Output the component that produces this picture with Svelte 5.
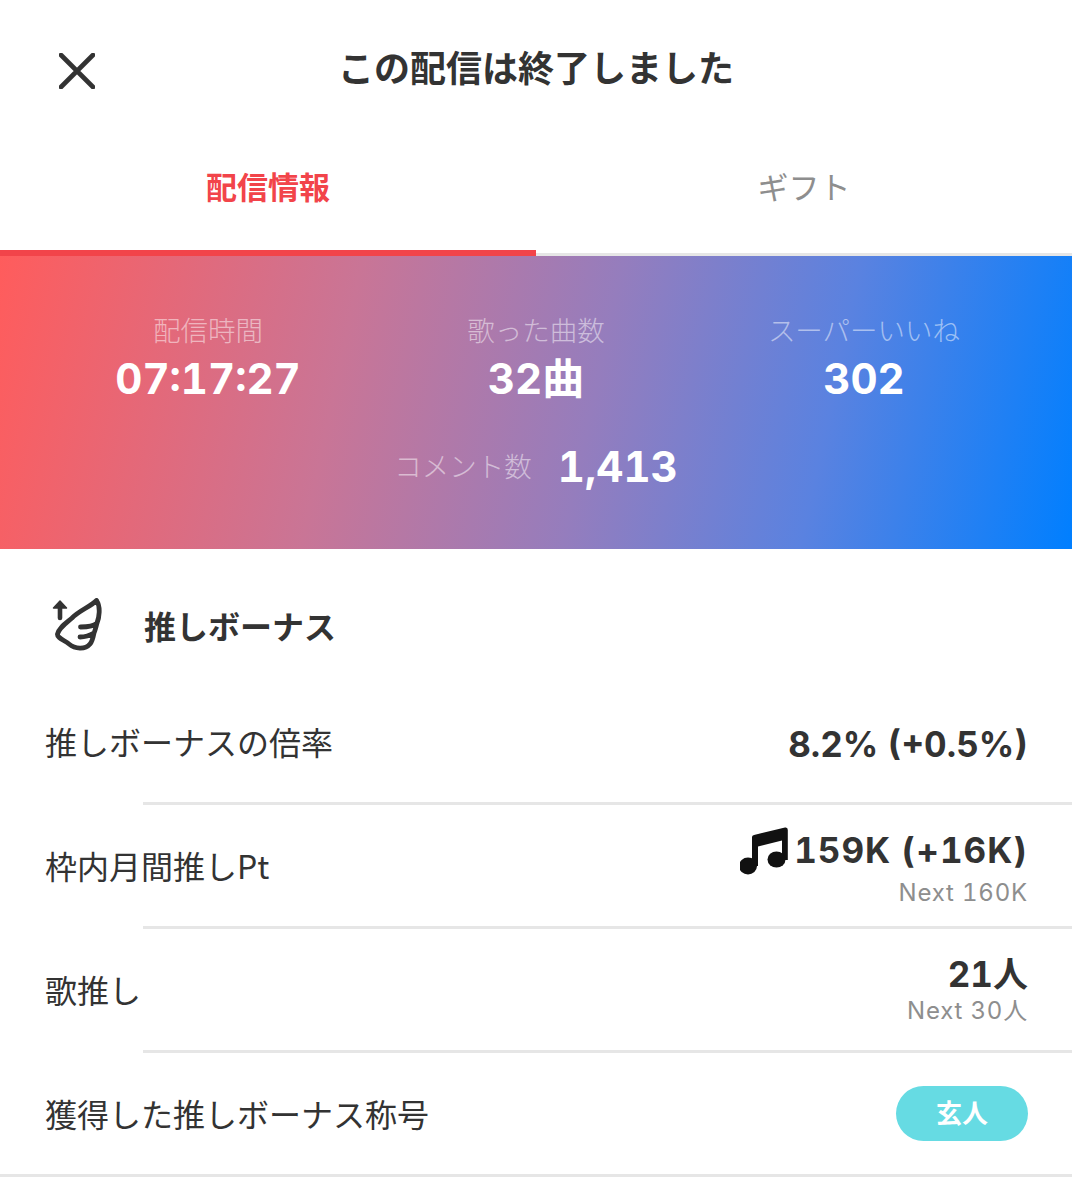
<script>
  const stats = [
    { label: "配信時間", value: "07:17:27" },
    { label: "歌った曲数", value: "32曲" },
    { label: "スーパーいいね", value: "302" },
  ]
</script>

<div class="page">
  <header class="top">
    <svg class="close" viewBox="0 0 36 36" width="36" height="36" aria-hidden="true">
      <path d="M2 2 L34 34 M34 2 L2 34" stroke="#333" stroke-width="4.6" stroke-linecap="round" />
    </svg>
    <h1>この配信は終了しました</h1>
  </header>

  <nav class="tabs">
    <div class="tab active">配信情報</div>
    <div class="tab">ギフト</div>
  </nav>

  <section class="panel">
    <div class="stats">
      {#each stats as s}
        <div class="stat">
          <div class="label">{s.label}</div>
          <div class="value">{s.value}</div>
        </div>
      {/each}
    </div>
    <div class="comments">
      <span class="label">コメント数</span>
      <span class="value">1,413</span>
    </div>
  </section>

  <div class="bonus-head">
    <svg class="wing" viewBox="0 0 52 54" width="52" height="54" aria-hidden="true">
      <path d="M8 20 V7" fill="none" stroke="#333" stroke-width="4.6" stroke-linecap="round" />
      <path d="M8 3 L14.5 10 H1.5 Z" fill="#333" stroke="#333" stroke-width="1.5" stroke-linejoin="round" />
      <path d="M44.5 2.5 C38 9 28 12 20 20 C13 26 7 30 5.5 36 C5 40 12 42 17 46 C23 51 33 52 38 46 C40 44 41 40 42 35 C37 38 32 39 28 39 M28.5 29 C35 29 42 28 45 25 C44 29 43 33 42 35 M45 25 C47 20 49 9 44.5 2.5" fill="none" stroke="#333" stroke-width="4.8" stroke-linejoin="round" stroke-linecap="round" />
    </svg>
    <h2>推しボーナス</h2>
  </div>

  <div class="row">
    <div class="name">推しボーナスの倍率</div>
    <div class="right single"><div class="num">8.2% (+0.5%)</div></div>
  </div>
  <div class="row">
    <div class="name">枠内月間推しPt</div>
    <div class="right">
      <div class="num tall">
        <svg class="note" viewBox="0 0 48 48" width="48" height="48" aria-hidden="true">
          <path d="M14 8 L45 0.6 Q47.8 0 47.8 3 V33 H42 V13.5 L18 19.5 V39 H12 V10 Q12 8.5 14 8 Z" fill="#111" />
          <ellipse cx="36.5" cy="32.5" rx="9" ry="8" fill="#111" />
          <ellipse cx="8" cy="39" rx="9" ry="8.4" fill="#111" />
        </svg>159K (+16K)
      </div>
      <div class="next">Next 160K</div>
    </div>
  </div>
  <div class="row">
    <div class="name">歌推し</div>
    <div class="right">
      <div class="num">21人</div>
      <div class="next">Next 30人</div>
    </div>
  </div>
  <div class="row last">
    <div class="name">獲得した推しボーナス称号</div>
    <div class="right"><div class="pill">玄人</div></div>
  </div>
</div>

<style>
  :global(body) {
    margin: 0;
    background: #fff;
  }
  .page {
    width: 1072px;
    height: 1200px;
    overflow: hidden;
    font-family: "Noto Sans CJK JP", "Noto Sans", sans-serif;
    color: #333;
  }
  .top {
    position: relative;
    height: 134px;
    box-sizing: border-box;
    padding-bottom: 2px;
    display: flex;
    justify-content: center;
    align-items: center;
  }
  .close {
    position: absolute;
    left: 59px;
    top: 53px;
  }
  h1 {
    margin: 0;
    font-size: 36px;
    font-weight: 700;
  }
  .tabs {
    display: flex;
    height: 122px;
  }
  .tab {
    flex: 1;
    display: flex;
    align-items: center;
    justify-content: center;
    font-size: 31px;
    color: #8e8e8e;
    box-sizing: border-box;
    border-bottom: 3px solid #e6e6e6;
    padding-bottom: 16px;
  }
  .tab.active {
    color: #f2444a;
    font-weight: 700;
    border-bottom: 6px solid #f2444a;
    padding-bottom: 13px;
  }
  .panel {
    height: 293px;
    box-sizing: border-box;
    background: linear-gradient(102deg, #ff5c5c 0%, #c97596 32%, #957dbd 55%, #5a82e0 76%, #007fff 100%);
    color: #fff;
    padding-top: 53px;
  }
  .stats {
    display: grid;
    grid-template-columns: 416px 240px 416px;
    text-align: center;
  }
  .label {
    font-size: 27.5px;
    font-weight: 300;
    line-height: 40px;
    color: rgba(255, 255, 255, 0.5);
  }
  .value {
    font-family: Inter, "Noto Sans CJK JP", sans-serif;
    font-variant-numeric: tabular-nums;
    font-size: 42px;
    font-weight: 700;
    line-height: 60px;
  }
  .comments {
    display: flex;
    justify-content: center;
    align-items: center;
    gap: 26px;
    margin-top: 28px;
  }
  .comments .label {
    padding-bottom: 4px;
  }
  .bonus-head {
    height: 132px;
    display: flex;
    align-items: center;
    padding: 20px 0 0 52px;
    box-sizing: border-box;
    gap: 40px;
  }
  h2 {
    margin: 0;
    font-size: 32px;
    font-weight: 700;
  }
  .row {
    position: relative;
    height: 124px;
    box-sizing: border-box;
    display: flex;
    justify-content: space-between;
    align-items: center;
    padding: 0 44px 4px 45px;
  }
  .row::after {
    content: "";
    position: absolute;
    left: 143px;
    right: 0;
    bottom: 0;
    height: 3px;
    background: #e6e6e6;
  }
  .row.last::after {
    left: 0;
  }
  .name {
    font-size: 32px;
  }
  .right {
    text-align: right;
  }
  .right.single {
    padding-top: 6px;
  }
  .num {
    font-family: Inter, "Noto Sans CJK JP", sans-serif;
    font-variant-numeric: tabular-nums;
    font-size: 35px;
    font-weight: 700;
    line-height: 44px;
    display: flex;
    justify-content: flex-end;
    align-items: center;
  }
  .num.tall {
    height: 56px;
    letter-spacing: 1px;
  }
  .note {
    margin-right: 6px;
    margin-top: 2px;
  }
  .next {
    font-family: Inter, "Noto Sans CJK JP", sans-serif;
    font-variant-numeric: tabular-nums;
    font-size: 24px;
    line-height: 30px;
    letter-spacing: 0.8px;
    color: #8e8e8e;
  }
  .pill {
    width: 132px;
    height: 55px;
    border-radius: 28px;
    background: #66dbe3;
    color: #fff;
    font-size: 26px;
    font-weight: 700;
    box-sizing: border-box;
    padding-bottom: 3px;
    display: flex;
    align-items: center;
    justify-content: center;
  }
</style>
